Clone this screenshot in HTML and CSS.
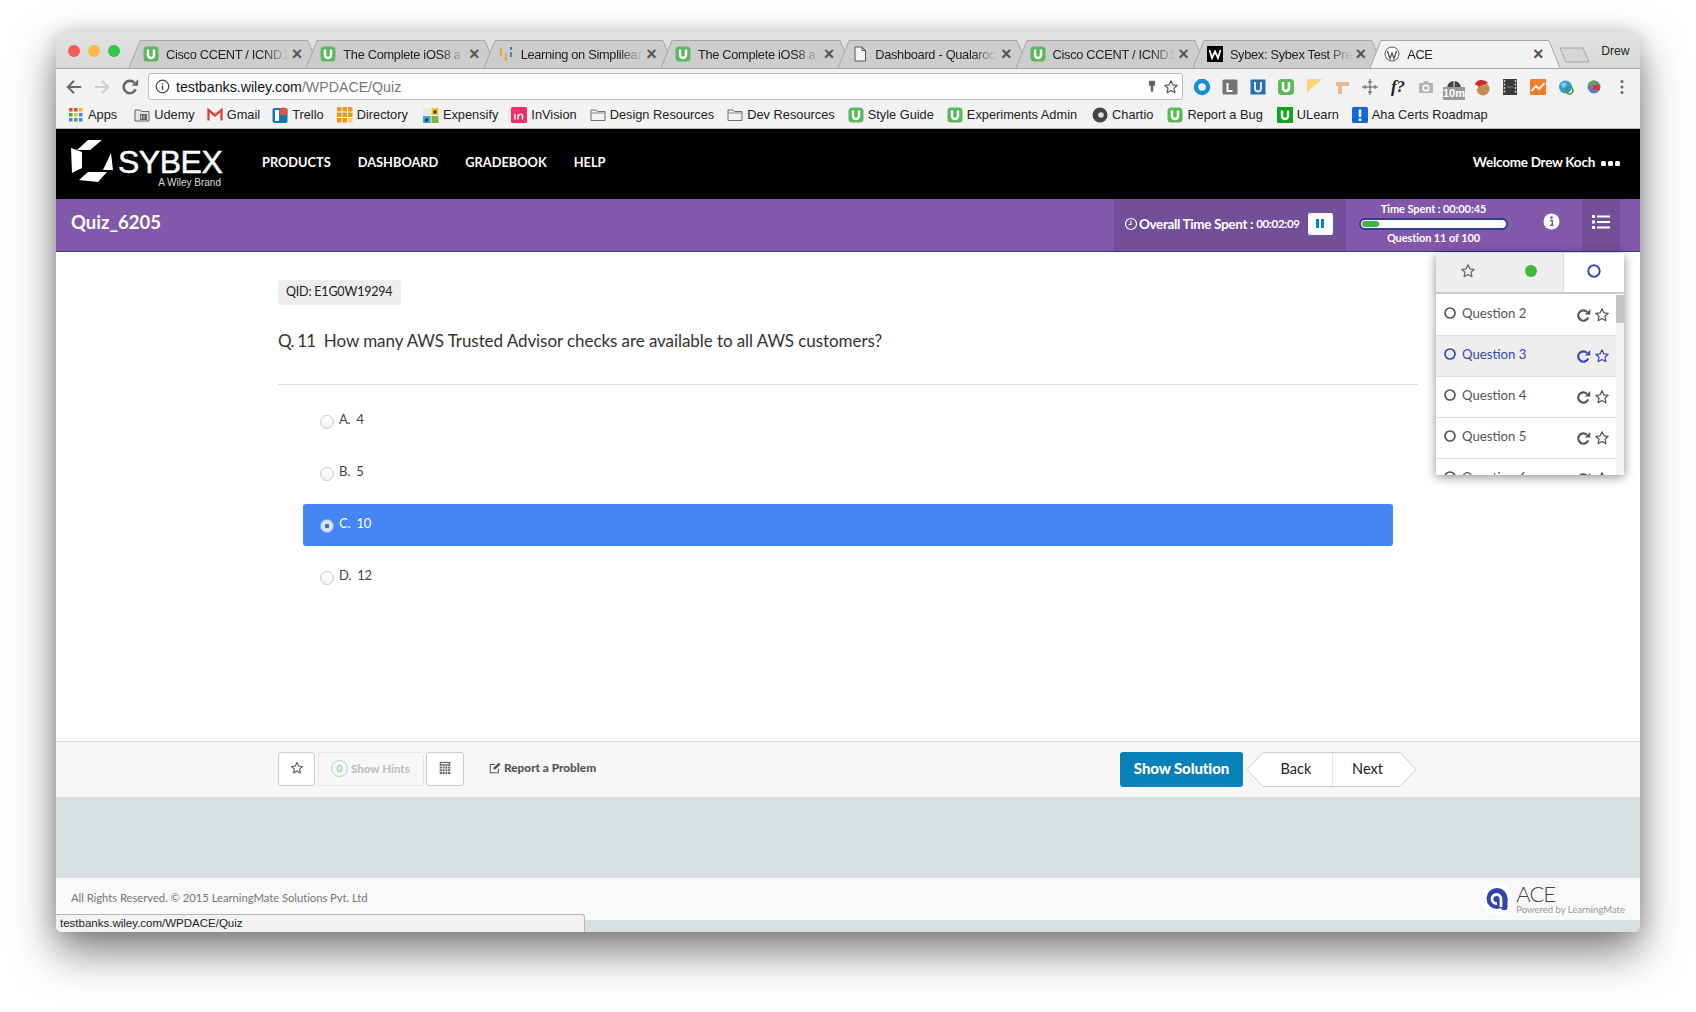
FILE: index.html
```html
<!DOCTYPE html>
<html lang="en">
<head>
<meta charset="utf-8">
<title>ACE</title>
<link rel="stylesheet" href="styles.css">
</head>
<body>
<svg class="defs" width="0" height="0" aria-hidden="true">
  <defs>
    <symbol id="u" viewBox="0 0 16 16"><rect x="0.5" y="0.5" width="15" height="15" rx="3.5" fill="#5cb85c"/><path d="M5 3.5v5.5a3 3 0 0 0 6 0V3.5" fill="none" stroke="#fff" stroke-width="2.4"/></symbol>
    <symbol id="u2" viewBox="0 0 16 16"><rect width="16" height="16" fill="#12a51c"/><path d="M5 3.5v5.5a3 3 0 0 0 6 0V3.5" fill="none" stroke="#fff" stroke-width="2.4"/></symbol>
    <symbol id="folder" viewBox="0 0 16 16"><path d="M1 13.5V3h5l1.5 1.5H15v9z" fill="#f2f2f2" stroke="#6f6f6f"/><path d="M1 6h14" stroke="#8a8a8a"/></symbol>
    <symbol id="doc" viewBox="0 0 16 16"><path d="M3 1h7l3.500 3.500V15H3z M10 1v3.500h3.500" fill="#f4f4f4" stroke="#555"/></symbol>
    <symbol id="star" viewBox="0 0 16 16"><path d="M8 1.800l1.900 4 4.300.5-3.200 3 .9 4.400L8 11.500l-3.900 2.200.9-4.400-3.200-3 4.300-.5z" fill="none" stroke="currentColor" stroke-width="1.200" stroke-linejoin="round"/></symbol>
    <symbol id="refresh" viewBox="0 0 16 16"><path d="M13 10A5.500 5.500 0 1 1 11.800 4.200" fill="none" stroke="currentColor" stroke-width="2.300"/><path d="M9.500 6.800h5.700V1.100z" fill="currentColor"/></symbol>
    <symbol id="ring" viewBox="0 0 14 14"><circle cx="7" cy="7" r="5" fill="none" stroke="currentColor" stroke-width="1.700"/></symbol>
  </defs>
</svg>

<div class="window">
  <div class="tabstrip">
    <div class="lights"><i class="light red"></i><i class="light yellow"></i><i class="light green"></i></div>
    <div class="tabs">
      <div class="tab"><svg class="tab-shape" viewBox="0 0 190 28" preserveAspectRatio="none"><path d="M0 28L11 .5H179L190 28"/></svg><svg class="fav"><use href="#u"/></svg><span class="tab-title">Cisco CCENT / ICND1</span><span class="tab-x">×</span></div>
      <div class="tab"><svg class="tab-shape" viewBox="0 0 190 28" preserveAspectRatio="none"><path d="M0 28L11 .5H179L190 28"/></svg><svg class="fav"><use href="#u"/></svg><span class="tab-title">The Complete iOS8 a</span><span class="tab-x">×</span></div>
      <div class="tab"><svg class="tab-shape" viewBox="0 0 190 28" preserveAspectRatio="none"><path d="M0 28L11 .5H179L190 28"/></svg><svg class="fav" viewBox="0 0 16 16"><path d="M3 2v8" stroke="#f3a712" stroke-width="1.800"/><path d="M8 7v8" stroke="#f3a712" stroke-width="1.800"/><path d="M13 1v3M13 6v5" stroke="#2b7cd3" stroke-width="1.800"/></svg><span class="tab-title">Learning on Simplilear</span><span class="tab-x">×</span></div>
      <div class="tab"><svg class="tab-shape" viewBox="0 0 190 28" preserveAspectRatio="none"><path d="M0 28L11 .5H179L190 28"/></svg><svg class="fav"><use href="#u"/></svg><span class="tab-title">The Complete iOS8 a</span><span class="tab-x">×</span></div>
      <div class="tab"><svg class="tab-shape" viewBox="0 0 190 28" preserveAspectRatio="none"><path d="M0 28L11 .5H179L190 28"/></svg><svg class="fav"><use href="#doc"/></svg><span class="tab-title">Dashboard - Qualaroc</span><span class="tab-x">×</span></div>
      <div class="tab"><svg class="tab-shape" viewBox="0 0 190 28" preserveAspectRatio="none"><path d="M0 28L11 .5H179L190 28"/></svg><svg class="fav"><use href="#u"/></svg><span class="tab-title">Cisco CCENT / ICND1</span><span class="tab-x">×</span></div>
      <div class="tab"><svg class="tab-shape" viewBox="0 0 190 28" preserveAspectRatio="none"><path d="M0 28L11 .5H179L190 28"/></svg><svg class="fav" viewBox="0 0 16 16"><rect width="16" height="16"/><path d="M2.500 4l2.500 8 3-6.500L11 12l2.500-8" fill="none" stroke="#fff" stroke-width="1.800"/></svg><span class="tab-title">Sybex: Sybex Test Pre</span><span class="tab-x">×</span></div>
      <div class="tab tab-active"><svg class="tab-shape" viewBox="0 0 190 28" preserveAspectRatio="none"><path d="M0 28L11 .5H179L190 28"/></svg><svg class="fav" viewBox="0 0 16 16"><circle cx="8" cy="8" r="7" fill="#fff" stroke="#555"/><path d="M3.500 5l2.500 7.500L8 7l2 5.500L12.500 5" fill="none" stroke="#555" stroke-width="1.300"/></svg><span class="tab-title">ACE</span><span class="tab-x">×</span></div>
    </div>
    <svg class="newtab" viewBox="0 0 32 16"><path d="M1 1H24L30 15H7z"/></svg>
    <span class="profile">Drew</span>
  </div>

  <div class="toolbar">
    <div class="navs">
      <svg class="nav-ico" viewBox="0 0 16 16"><path d="M14.500 8H2.500M8 2.500L2.500 8 8 13.500" fill="none" stroke="#6a6a6a" stroke-width="1.800"/></svg>
      <svg class="nav-ico" viewBox="0 0 16 16"><path d="M1.500 8h12M8 2.500L13.500 8 8 13.500" fill="none" stroke="#cfcfcf" stroke-width="1.800"/></svg>
      <svg class="nav-ico nav-reload"><use href="#refresh"/></svg>
    </div>
    <div class="omnibox">
      <svg class="info-ico" viewBox="0 0 16 16"><circle cx="8" cy="8" r="6.700" fill="none" stroke="#444" stroke-width="1.300"/><path d="M8 7v4.500M8 4.200v1.500" stroke="#444" stroke-width="1.500"/></svg>
      <span class="url">testbanks.wiley.com<span class="url-path">/WPDACE/Quiz</span></span>
      <svg class="key-ico" viewBox="0 0 16 16"><path d="M4.500 1.500h7v5.500h-2V13l-1.500 1.500L6.500 13V7h-2z" fill="#666"/></svg>
      <svg class="omni-star"><use href="#star"/></svg>
    </div>
    <div class="exts">
      <svg class="ext" viewBox="0 0 18 18"><circle cx="9" cy="9" r="6" fill="none" stroke="#1491d6" stroke-width="4.500"/></svg>
      <svg class="ext" viewBox="0 0 18 18"><rect x="1.500" y="1.500" width="15" height="15" rx="1.500" fill="#757575"/><path d="M6.500 5v8h5" fill="none" stroke="#fff" stroke-width="2"/></svg>
      <svg class="ext" viewBox="0 0 18 18"><rect x="1.500" y="1.500" width="15" height="15" fill="#2c6fa6"/><path d="M6 4v6.500a3 3 0 0 0 6 0V4" fill="none" stroke="#dbe9f4" stroke-width="2"/></svg>
      <svg class="ext" viewBox="0 0 18 18"><rect x="1" y="1" width="16" height="16" rx="4" fill="#5cb85c"/><path d="M6 4v6a3 3 0 0 0 6 0V4" fill="none" stroke="#fff" stroke-width="2.500"/></svg>
      <svg class="ext" viewBox="0 0 18 18"><path d="M2 1h15L2 15z" fill="#fcd27c"/><path d="M2 15l7-7 8 8H2z" fill="#f3f3f3"/></svg>
      <svg class="ext" viewBox="0 0 18 18"><path d="M3 4h13v4H9v8H5V8H3z" fill="#e7b78f"/></svg>
      <svg class="ext" viewBox="0 0 18 18"><path d="M1 9h16M9 1v16M7 4h4M7 14h4M4 7v4M14 7v4" fill="none" stroke="#555"/></svg>
      <span class="ext ext-f">f?</span>
      <svg class="ext" viewBox="0 0 18 18"><path d="M2 5h4l1-2h4l1 2h4v10H2z" fill="#b5b5b5"/><circle cx="9" cy="10" r="2.800" fill="none" stroke="#fff" stroke-width="1.500"/></svg>
      <span class="ext ext-timer"><svg class="timer-arc" viewBox="0 0 18 10"><path d="M2 10a7 7 0 0 1 14 0z" fill="#444"/><path d="M9 3v7" stroke="#fff"/></svg><span class="timer-badge">10m</span></span>
      <svg class="ext" viewBox="0 0 18 18"><circle cx="10" cy="11" r="6.500" fill="#c98a55"/><path d="M2 7C3 2 10 0 15 5L4 9z" fill="#d9272e"/><circle cx="3" cy="9" r="2" fill="#fff"/></svg>
      <svg class="ext" viewBox="0 0 18 18"><rect x="2" y="1" width="14" height="16" fill="#3b3b3b"/><path d="M3.500 2v14M14.500 2v14" stroke="#cfcfcf" stroke-width="1.500" stroke-dasharray="2 1.500"/><path d="M6 9h6" stroke="#888"/></svg>
      <svg class="ext" viewBox="0 0 18 18"><rect x="1" y="1" width="16" height="16" rx="1" fill="#f57c2b"/><path d="M2.500 13L7 8l3 3 5.500-6" fill="none" stroke="#fff" stroke-width="1.800"/></svg>
      <svg class="ext" viewBox="0 0 18 18"><circle cx="8.500" cy="9" r="6.500" fill="#3a97d8"/><path d="M4 6l4-2 2 3-4 3z" fill="#8ccdf2"/><circle cx="12.500" cy="12.500" r="3.500" fill="none" stroke="#3f9b3a" stroke-width="1.600"/></svg>
      <svg class="ext" viewBox="0 0 18 18"><circle cx="9" cy="9" r="6.500" fill="#5b7fc4"/><path d="M3 6a6.500 6.500 0 0 1 10-2L8 9z" fill="#57a84f"/><path d="M8 7h7v5H8z" fill="#d8343c"/></svg>
      <svg class="ext" viewBox="0 0 18 18"><circle cx="9" cy="3.500" r="1.500" fill="#666"/><circle cx="9" cy="9" r="1.500" fill="#666"/><circle cx="9" cy="14.500" r="1.500" fill="#666"/></svg>
    </div>
  </div>

  <div class="bookmarks">
    <a class="bm"><svg class="bm-ico" viewBox="0 0 16 16"><g fill="#e44b3c"><rect x="1" y="1" width="3.500" height="3.500"/><rect x="6" y="1" width="3.500" height="3.500"/></g><rect x="11" y="1" width="3.500" height="3.500" fill="#f5b914"/><rect x="1" y="6" width="3.500" height="3.500" fill="#3fa757"/><rect x="6" y="6" width="3.500" height="3.500" fill="#f5b914"/><rect x="11" y="6" width="3.500" height="3.500" fill="#4285f4"/><rect x="1" y="11" width="3.500" height="3.500" fill="#4285f4"/><rect x="6" y="11" width="3.500" height="3.500" fill="#3fa757"/><rect x="11" y="11" width="3.500" height="3.500" fill="#4285f4"/></svg>Apps</a>
    <a class="bm bm-udemy"><svg class="bm-ico" viewBox="0 0 16 16"><path d="M1 14V3h5l1.500 1.500H15V14z" fill="#e4e4e4" stroke="#666"/><path d="M6 7h7v6H6z" fill="#666"/><path d="M7.500 8.500v3M10 8.500v3" stroke="#ddd"/></svg>Udemy</a>
    <a class="bm bm-gmail"><svg class="bm-ico" viewBox="0 0 16 16"><path d="M1.500 13.500V3L8 8.500 14.500 3v10.500" fill="none" stroke="#d8433a" stroke-width="2.300"/></svg>Gmail</a>
    <a class="bm bm-trello"><svg class="bm-ico" viewBox="0 0 16 16"><rect x="0.500" y="1" width="15" height="15" rx="2" fill="#0c79bf"/><rect x="3" y="3" width="4" height="11" fill="#fff"/><circle cx="11.500" cy="4.500" r="4" fill="#e4573d"/></svg>Trello</a>
    <a class="bm"><svg class="bm-ico" viewBox="0 0 16 16"><g fill="#f59421"><rect width="4.500" height="4.500"/><rect x="5.500" width="4.500" height="4.500"/><rect x="11" width="4.500" height="4.500"/><rect y="5.500" width="4.500" height="4.500"/><rect x="5.500" y="5.500" width="4.500" height="4.500"/><rect x="11" y="5.500" width="4.500" height="4.500"/><rect y="11" width="4.500" height="4.500"/><rect x="5.500" y="11" width="4.500" height="4.500"/><rect x="11" y="11" width="4.500" height="4.500" fill="#fbc98a"/></g></svg>Directory</a>
    <a class="bm bm-expensify"><svg class="bm-ico" viewBox="0 0 16 16"><rect x="0" y="1" width="7.500" height="7" fill="#e8e8e8"/><rect x="8.500" y="1" width="7" height="7" fill="#f3c623"/><rect x="0" y="9" width="7.500" height="7" fill="#37a5dd"/><rect x="8.500" y="9" width="7" height="7" fill="#7cb342"/><path d="M10.500 3.500h3v3h-3zM2 11.500h3v3H2z" fill="#333"/></svg>Expensify</a>
    <a class="bm"><svg class="bm-ico" viewBox="0 0 16 16"><rect width="16" height="16" rx="1.500" fill="#f12d6b"/><path d="M4 7v5.500M7 7.500v5M7.500 9c1-2.500 4-2.500 4 0v3.500" fill="none" stroke="#fff" stroke-width="1.400"/></svg>InVision</a>
    <a class="bm"><svg class="bm-ico"><use href="#folder"/></svg>Design Resources</a>
    <a class="bm"><svg class="bm-ico"><use href="#folder"/></svg>Dev Resources</a>
    <a class="bm"><svg class="bm-ico"><use href="#u"/></svg>Style Guide</a>
    <a class="bm"><svg class="bm-ico"><use href="#u"/></svg>Experiments Admin</a>
    <a class="bm bm-chartio"><svg class="bm-ico" viewBox="0 0 16 16"><circle cx="8" cy="8" r="7.500" fill="#444"/><circle cx="9" cy="8" r="2.800" fill="#ddd"/></svg>Chartio</a>
    <a class="bm bm-report"><svg class="bm-ico"><use href="#u"/></svg>Report a Bug</a>
    <a class="bm bm-report"><svg class="bm-ico"><use href="#u2"/></svg>ULearn</a>
    <a class="bm"><svg class="bm-ico" viewBox="0 0 16 16"><rect width="16" height="16" rx="1.500" fill="#1565d8"/><path d="M8 2.500v7.500M8 11.500v2.500" stroke="#fff" stroke-width="2.500"/></svg>Aha Certs Roadmap</a>
  </div>

  <header class="site-header">
    <div class="logo">
      <svg class="logo-mark" viewBox="0 0 42 42"><path d="M17 0H31L19 10H6zM0 8l11 4v16L1 33zM8 40l9-8H36l-9 10zM40 13l2 17H32z" fill="#fff"/></svg>
      <div class="logo-type"><span class="logo-name">SYBEX</span><span class="logo-sub">A Wiley Brand</span></div>
    </div>
    <nav class="main-nav"><a>PRODUCTS</a><a>DASHBOARD</a><a>GRADEBOOK</a><a>HELP</a></nav>
    <div class="welcome">Welcome Drew Koch <span class="welcome-dots"><i></i><i></i><i></i></span></div>
  </header>

  <div class="subbar">
    <div class="quiz-title">Quiz_6205</div>
    <div class="overall">
      <svg class="clock" viewBox="0 0 14 14"><circle cx="7" cy="7" r="5.500" fill="none" stroke="#fff" stroke-width="1.200"/><path d="M7 3.500V7.500H4.500" fill="none" stroke="#fff" stroke-width="1.100"/></svg>
      <span class="overall-label">Overall Time Spent :</span><span class="overall-time">00:02:09</span>
      <span class="pause"><i></i><i></i></span>
    </div>
    <div class="timer">
      <div class="timer-line">Time Spent : 00:00:45</div>
      <div class="progress"><div class="progress-fill"></div></div>
      <div class="timer-line">Question 11 of 100</div>
    </div>
    <svg class="info-btn" viewBox="0 0 16 16"><circle cx="8" cy="8" r="7.500" fill="#fff"/><path d="M6.500 7h2.300v4.500h1M6.500 11.500h3.300" fill="none" stroke="#8058a8" stroke-width="1.500"/><circle cx="8" cy="4.300" r="1.300" fill="#8058a8"/></svg>
    <div class="list-btn"><svg class="list-ico" viewBox="0 0 18 14"><path d="M0 0h3v3H0zM0 5.500h3v3H0zM0 11h3v3H0zM5 .5h13v2H5zM5 6h13v2H5zM5 11.500h13v2H5z" fill="#fff"/></svg></div>
  </div>

  <main class="content">
    <div class="qid">QID: E1G0W19294</div>
    <div class="question"><span class="q-num">Q. 11</span>&nbsp; How many AWS Trusted Advisor checks are available to all AWS customers?</div>
    <hr class="rule">
    <div class="options">
      <label class="option"><i class="radio"></i><span>A.&nbsp; 4</span></label>
      <label class="option"><i class="radio"></i><span>B.&nbsp; 5</span></label>
      <label class="option option-on"><i class="radio radio-on"></i><span>C.&nbsp; 10</span></label>
      <label class="option"><i class="radio"></i><span>D.&nbsp; 12</span></label>
    </div>

    <aside class="panel">
      <div class="panel-tabs">
        <div class="panel-tab panel-tab-grey"><svg class="ptab-star"><use href="#star"/></svg></div>
        <div class="panel-tab panel-tab-grey"><i class="dot-green"></i></div>
        <div class="panel-tab panel-tab-white"><svg class="ptab-ring"><use href="#ring"/></svg></div>
      </div>
      <div class="panel-body">
        <div class="panel-rows">
          <div class="qrow"><svg class="q-ring"><use href="#ring"/></svg><span class="q-name">Question 2</span><svg class="q-refresh"><use href="#refresh"/></svg><svg class="q-star"><use href="#star"/></svg></div>
          <div class="qrow qrow-on"><svg class="q-ring"><use href="#ring"/></svg><span class="q-name">Question 3</span><svg class="q-refresh"><use href="#refresh"/></svg><svg class="q-star"><use href="#star"/></svg></div>
          <div class="qrow"><svg class="q-ring"><use href="#ring"/></svg><span class="q-name">Question 4</span><svg class="q-refresh"><use href="#refresh"/></svg><svg class="q-star"><use href="#star"/></svg></div>
          <div class="qrow"><svg class="q-ring"><use href="#ring"/></svg><span class="q-name">Question 5</span><svg class="q-refresh"><use href="#refresh"/></svg><svg class="q-star"><use href="#star"/></svg></div>
          <div class="qrow"><svg class="q-ring"><use href="#ring"/></svg><span class="q-name">Question 6</span><svg class="q-refresh"><use href="#refresh"/></svg><svg class="q-star"><use href="#star"/></svg></div>
        </div>
        <div class="scrollbar"><div class="scroll-thumb"></div></div>
      </div>
    </aside>
  </main>

  <div class="actionbar">
    <button class="tool tool-star"><svg class="tool-ico"><use href="#star"/></svg></button>
    <button class="tool tool-hints"><span class="hint-count">0</span>Show Hints</button>
    <button class="tool tool-calc"><svg class="tool-ico" viewBox="0 0 16 16"><rect x="2" y="1" width="12" height="14" fill="#666"/><path d="M3.500 3h9" stroke="#eee" stroke-width="1.500"/><path d="M2 6h12M2 9h12M2 12h12M5 5v10M8 5v10M11 5v10" stroke="#eee"/></svg></button>
    <a class="report"><svg class="report-ico" viewBox="0 0 14 14"><path d="M11 8v4.500H1.500V3H7" fill="none" stroke="#555" stroke-width="1.200"/><path d="M5.500 6.500L11.500 .8l2 2-6 5.700-2.300.4z" fill="#555"/></svg>Report a Problem</a>
    <button class="solution">Show Solution</button>
    <div class="pager">
      <button class="page page-back"><svg class="page-shape" viewBox="0 0 86 35"><path d="M86 .5H17L1 17.500 17 34.500H86"/></svg><span class="page-label">Back</span></button>
      <button class="page page-next"><svg class="page-shape" viewBox="0 0 85 35"><path d="M0 .5H68L84 17.500 68 34.500H0z"/></svg><span class="page-label">Next</span></button>
    </div>
  </div>

  <div class="band"></div>

  <footer class="footer">
    <span class="copyright">All Rights Reserved. © 2015 LearningMate Solutions Pvt. Ltd</span>
    <div class="ace">
      <svg class="ace-mark" viewBox="0 0 32 32"><circle cx="16" cy="16" r="16" fill="#fff"/><circle cx="16" cy="15.500" r="10.500" fill="#2f45ad"/><path d="M21 15h5.500v9a3.200 3.200 0 0 1-6.400 0z" fill="#2f45ad"/><path d="M16 20.500h-.5a4.500 4.500 0 1 1 4.500-4.500v8" fill="none" stroke="#fff" stroke-width="2.800"/></svg>
      <div class="ace-type"><span class="ace-name">ACE</span><span class="ace-sub">Powered by LearningMate</span></div>
    </div>
  </footer>
  <div class="bottomband"></div>
  <div class="statusbubble">testbanks.wiley.com/WPDACE/Quiz</div>
</div>
</body>
</html>
```
FILE: styles.css
```css
* { box-sizing: border-box; }
html, body { margin: 0; height: 100%; }
body {
  padding: 32px 56px 0;
  height: 1012px;
  overflow: hidden;
  background: #fff;
  font-family: "Lato", "Liberation Sans", sans-serif;
  color: #333;
}
.defs { position: absolute; }
button { font: inherit; padding: 0; cursor: pointer; }
i { display: block; }

.window {
  position: relative;
  width: 1584px;
  height: 900px;
  display: flex;
  flex-direction: column;
  border-radius: 6px;
  background: #fff;
  box-shadow: 0 20px 44px rgba(0,0,0,.5), 0 0 18px rgba(0,0,0,.14);
}

/* browser chrome */
.tabstrip {
  height: 36px;
  flex: none;
  display: flex;
  align-items: flex-end;
  padding-left: 12px;
  background: linear-gradient(#e3e3e3, #d8d8d8);
  border-radius: 6px 6px 0 0;
  font-family: "Liberation Sans", sans-serif;
  font-size: 12.8px;
  color: #222;
}
.lights { display: flex; gap: 8px; align-self: center; margin-right: 9px; margin-top: 1px; }
.light { width: 12px; height: 12px; border-radius: 50%; }
.red { background: #fc5b57; }
.yellow { background: #fdbb40; }
.green { background: #33c748; }
.tabs { display: flex; align-items: flex-end; }
.tab {
  position: relative;
  width: 190px;
  height: 28px;
  display: flex;
  align-items: center;
  padding: 0 0 0 14px;
}
.tab + .tab { margin-left: -12.7px; }
.tab-shape { position: absolute; inset: 0; width: 100%; height: 100%; overflow: visible; }
.tab-shape path { fill: #cdcdcd; stroke: #a6a6a6; stroke-width: 1; }
.tab-active { z-index: 2; }
.tab-active .tab-shape path { fill: #f2f2f2; }
.fav { position: relative; width: 16px; height: 16px; flex: none; margin-right: 7px; }
.tab-title {
  position: relative;
  width: 124px;
  flex: none;
  overflow: hidden;
  white-space: nowrap;
  letter-spacing: -.3px;
  -webkit-mask-image: linear-gradient(90deg, #000 calc(100% - 26px), rgba(0,0,0,.1) 96%);
  mask-image: linear-gradient(90deg, #000 calc(100% - 26px), rgba(0,0,0,.1) 96%);
}
.tab-x { position: relative; font-size: 18px; line-height: 16px; font-weight: 700; color: #555; margin-left: 1px; width: 12px; text-align: center; }
.newtab { width: 32px; height: 16px; margin: 0 0 5px -1px; }
.newtab path { fill: #d5d5d5; stroke: #a6a6a6; }
.profile { margin: 0 0 10px 10px; color: #222; font-size: 12.2px; }

.toolbar {
  height: 36px;
  flex: none;
  display: flex;
  align-items: center;
  padding: 0 4px;
  background: #f2f2f2;
  border-top: 1px solid #a8a8a8;
}
.navs { display: flex; }
.nav-ico { width: 28px; height: 18px; }
.nav-reload { color: #666; }
.omnibox {
  width: 1035px;
  height: 27px;
  margin-left: 4px;
  display: flex;
  align-items: center;
  padding: 0 3px 0 6px;
  background: #fff;
  border: 1px solid #bbb;
  border-radius: 3px;
  font-family: "Liberation Sans", sans-serif;
  font-size: 14.2px;
  color: #111;
}
.info-ico { width: 15px; height: 15px; margin-right: 6px; }
.url { flex: 1; }
.url-path { color: #777; }
.key-ico { width: 14px; height: 15px; margin-right: 4px; }
.omni-star { width: 16px; height: 16px; color: #555; }
.exts { display: flex; margin-left: 5px; }
.ext { width: 28px; height: 18px; flex: none; }
.ext-f { font: italic 700 17px/18px "Liberation Serif", serif; color: #222; text-align: center; }
.ext-timer { position: relative; }
.timer-arc { position: absolute; left: 5px; top: 0; width: 18px; height: 10px; }
.timer-badge {
  position: absolute; left: 3px; top: 9px; width: 22px; height: 13px;
  background: #999; color: #fff;
  font: 700 11px/13px "Liberation Sans", sans-serif; text-align: center;
}

.bookmarks {
  height: 25px;
  flex: none;
  display: flex;
  align-items: center;
  gap: 13px;
  padding: 0 0 3px 12px;
  background: #f2f2f2;
  border-bottom: 1px solid #b5b5b5;
  font-family: "Liberation Sans", sans-serif;
  font-size: 12.8px;
  color: #222;
}
.bm { display: flex; align-items: center; gap: 4px; white-space: nowrap; }
.bm-ico { width: 16px; height: 16px; flex: none; }
.bm-udemy { margin-left: 4px; }
.bm-gmail { margin-left: -1px; }
.bm-trello { margin-left: -1px; }
.bm-expensify { margin-left: 2px; }
.bm-chartio { margin-left: 2px; }
.bm-report { margin-left: 1px; }

/* site header */
.site-header {
  height: 70px;
  flex: none;
  display: flex;
  align-items: center;
  background: #000;
  color: #fff;
  padding: 0 20px 0 15px;
}
.logo { display: flex; align-items: flex-start; width: 191px; height: 42px; align-self: flex-start; margin-top: 11px; }
.logo-mark { width: 42px; height: 42px; flex: none; }
.logo-type { display: flex; flex-direction: column; margin-left: 5px; width: 106px; }
.logo-name { font: 400 32px/26px "Liberation Sans", sans-serif; letter-spacing: -.5px; margin-top: 9px; -webkit-text-stroke: .5px #fff; white-space: nowrap; }
.logo-sub { font: 400 10px/12px "Liberation Sans", sans-serif; color: #ddd; margin-top: 2px; text-align: right; margin-right: 3px; white-space: nowrap; }
.main-nav { display: flex; gap: 27px; font-size: 12.8px; font-weight: 700; margin-top: -5px; }
.welcome { margin-left: auto; font-size: 13.5px; font-weight: 700; letter-spacing: -.25px; display: flex; align-items: center; gap: 6px; margin-top: -5px; }
.welcome-dots { display: flex; gap: 2px; margin-top: 3px; }
.welcome-dots i { width: 5px; height: 5px; border-radius: 1.500px; background: #fff; }

/* quiz sub bar */
.subbar {
  height: 53px;
  flex: none;
  display: flex;
  align-items: stretch;
  background: #8258aa;
  border-bottom: 1px solid #2f3d8f;
  color: #fff;
}
.quiz-title { width: 1058px; padding: 11px 0 0 15px; font-size: 18.5px; font-weight: 700; line-height: 24px; }
.overall { width: 232px; display: flex; align-items: center; padding: 0 0 3px 10px; background: #744f99; }
.clock { width: 14px; height: 14px; margin-right: 1px; }
.overall-label { font-size: 13.5px; font-weight: 700; letter-spacing: -.35px; margin-right: 3px; white-space: nowrap; }
.overall-time { font-size: 11.5px; font-weight: 700; letter-spacing: -.3px; white-space: nowrap; }
.pause { width: 25px; height: 22px; margin-left: 8px; display: flex; align-items: center; justify-content: center; gap: 2px; background: #fff; border-radius: 2px; }
.pause i { width: 3px; height: 9px; background: #0b7fb9; }
.timer { width: 149px; margin-left: 13px; display: flex; flex-direction: column; align-items: center; padding-top: 3px; }
.timer-line { font-size: 11px; font-weight: 700; line-height: 14px; letter-spacing: -.1px; white-space: nowrap; }
.progress { width: 149px; height: 12px; margin: 2px 0 1px; background: #fff; border: 2px solid #2f3f97; border-radius: 6px; padding: 1px; }
.progress-fill { width: 12%; height: 100%; background: #3fb53f; border-radius: 4px; }
.info-btn { width: 17px; height: 17px; align-self: flex-start; margin: 14px 22px 0 35px; }
.list-btn { width: 38px; display: flex; align-items: center; justify-content: center; background: #744f99; padding-bottom: 6px; }
.list-ico { width: 18px; height: 14px; }

/* question */
.content { position: relative; flex: 1; min-height: 0; background: #fff; padding: 28px 0 0 222px; }
.qid {
  display: inline-block;
  width: 123px;
  height: 25px;
  padding-left: 8px;
  background: #eee;
  border-radius: 3px;
  font-size: 12.5px;
  line-height: 24px;
  letter-spacing: -.2px;
  color: #222;
}
.question { margin-top: 23px; font-size: 17px; line-height: 26px; letter-spacing: -.07px; color: #333; white-space: nowrap; }
.q-num { letter-spacing: -.8px; }
.rule { width: 1140px; height: 1px; margin: 30px 0 0; border: 0; background: #ddd; }
.options { width: 1090px; margin: 15px 0 0 25px; display: flex; flex-direction: column; gap: 10px; }
.option { height: 42px; display: flex; align-items: flex-start; gap: 5px; padding: 11px 0 0 17px; font-size: 13px; line-height: 16px; letter-spacing: -.25px; color: #444; border-radius: 3px; }
.option-on { background: #4485f4; color: #fff; }
.radio { width: 14px; height: 14px; margin-top: 4px; flex: none; border: 1px solid #c9c9c9; border-radius: 50%; background: linear-gradient(#fff, #f1f1f1); }
.radio-on { border-color: #8fb3ea; background: radial-gradient(circle, #3a6fbd 0 2px, #d5e1f5 2.5px); }

/* question list dropdown */
.panel {
  position: absolute;
  top: 1px;
  right: 16px;
  width: 188px;
  height: 222px;
  display: flex;
  flex-direction: column;
  overflow: hidden;
  background: #fff;
  box-shadow: 0 2px 10px rgba(0,0,0,.45);
}
.panel-tabs { height: 41px; flex: none; display: flex; border-bottom: 2px solid #ccc; }
.panel-tab { display: flex; align-items: center; justify-content: center; padding-bottom: 3px; }
.panel-tab-grey { width: 63.5px; background: #eee; }
.panel-tab-white { flex: 1; background: #fff; border-left: 1px solid #ddd; }
.ptab-star { width: 16px; height: 16px; color: #666; }
.dot-green { width: 12px; height: 12px; border-radius: 50%; background: #43b93c; }
.ptab-ring { width: 16px; height: 16px; color: #3748b8; }
.panel-body { flex: 1; min-height: 0; display: flex; margin-top: 1px; }
.panel-rows { flex: 1; min-width: 0; overflow: hidden; }
.qrow {
  height: 41px;
  display: flex;
  align-items: center;
  padding: 0 6px 0 7px;
  border-bottom: 1px solid #ddd;
  font-size: 13.2px;
  color: #555;
}
.qrow-on { background: #eee; color: #3748b8; }
.q-ring { width: 14px; height: 14px; margin: -4px 5px 0 0; flex: none; }
.q-name { flex: 1; margin-top: -4px; }
.q-refresh { width: 15px; height: 15px; margin-right: 3px; flex: none; }
.q-star { width: 16px; height: 16px; margin-right: 0; flex: none; }
.qrow .q-refresh, .qrow .q-star { margin-top: 0; }
.scrollbar { width: 8px; flex: none; background: #f3f3f3; }
.scroll-thumb { height: 28px; background: #c4c4c4; }

/* action bar */
.actionbar {
  height: 56px;
  flex: none;
  display: flex;
  align-items: flex-start;
  padding: 10px 223px 0 222px;
  background: #f7f7f7;
  border-top: 1px solid #ddd;
}
.tool { height: 34px; background: #fff; border: 1px solid #ccc; border-radius: 3px; display: flex; align-items: center; justify-content: center; color: #555; padding-bottom: 2px; }
.tool-star { width: 37px; }
.tool-hints { width: 106px; margin-left: 3px; border-color: #e6e6e6; background: #f7f7f7; font-size: 11.5px; font-weight: 900; color: #c0c0c0; gap: 3px; justify-content: flex-start; padding-left: 12px; }
.hint-count { width: 17px; height: 17px; border: 1px solid #a5dcae; border-radius: 50%; font-size: 10px; line-height: 14px; color: #9bd6a5; text-align: center; }
.tool-calc { width: 38px; margin-left: 2px; }
.tool-ico { width: 14px; height: 14px; }
.report { display: flex; align-items: center; height: 31px; margin-left: 25px; font-size: 11.8px; font-weight: 900; color: #555; gap: 3px; }
.report-ico { width: 12px; height: 12px; }
.solution {
  width: 123px;
  height: 35px;
  margin-left: auto;
  padding-bottom: 3px;
  border: 0;
  border-radius: 3px;
  background: #0a80b9;
  color: #fff;
  font-size: 15px;
  font-weight: 900;
  letter-spacing: -.1px;
}
.pager { display: flex; margin-left: 3px; }
.page { position: relative; height: 35px; background: none; border: 0; color: #222; font-size: 14.5px; padding-bottom: 3px; }
.page-shape { position: absolute; inset: 0; width: 100%; height: 100%; }
.page-shape path { fill: #fff; stroke: #ccc; }
.page-label { position: relative; }
.page-back { width: 86px; padding-left: 14px; }
.page-next { width: 85px; padding-right: 14px; }

.band { height: 81px; flex: none; background: #d9e0e2; }
.footer {
  height: 42px;
  flex: none;
  display: flex;
  align-items: center;
  justify-content: space-between;
  padding: 0 15px;
  background: #f8f8f8;
}
.copyright { font-size: 11.3px; color: #777; letter-spacing: -.05px; margin-top: -4px; }
.ace { display: flex; align-items: center; gap: 3px; }
.ace-mark { width: 32px; height: 32px; }
.ace-type { display: flex; flex-direction: column; }
.ace-name { font-size: 22px; font-weight: 300; line-height: 21px; letter-spacing: -1px; color: #444; }
.ace-sub { font-size: 9.5px; line-height: 11px; color: #999; white-space: nowrap; }
.bottomband { height: 12px; flex: none; background: #d9e0e2; border-radius: 0 0 6px 6px; }
.statusbubble {
  position: absolute;
  left: 0;
  bottom: 0;
  width: 529px;
  height: 18px;
  padding-left: 4px;
  background: #f2f2f2;
  border: 1px solid #b5b5b5;
  border-left: 0;
  border-bottom: 0;
  border-radius: 0 3px 0 6px;
  font-family: "Liberation Sans", sans-serif;
  font-size: 11.5px;
  line-height: 17px;
  color: #222;
}
```
